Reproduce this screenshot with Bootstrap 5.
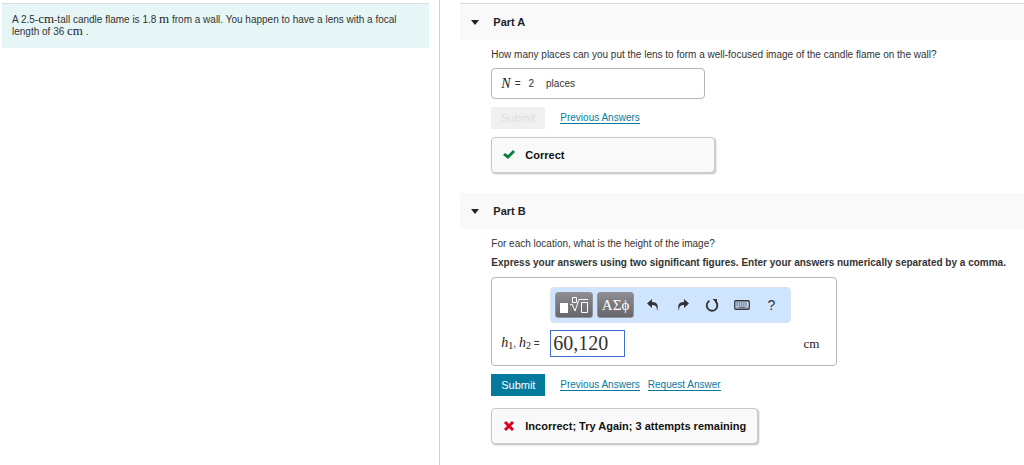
<!DOCTYPE html>
<html lang="en">
<head>
<meta charset="utf-8">
<meta name="viewport" content="width=device-width, initial-scale=1">
<title>Candle and lens problem</title>
<link href="https://cdn.jsdelivr.net/npm/bootstrap@5.3.0/dist/css/bootstrap.min.css" rel="stylesheet">
<style>
body{font-family:"Liberation Sans",Arial,sans-serif;font-size:10px;line-height:12px;color:#333;background:#fff}
.problem-pane{flex:0 0 43%;border-right:1px solid #ccd3dc;padding:3px 10px 0 2px}
.intro{background:#e6f6f7;border-top:1px solid #d5dfe0;padding:10px 20px 10px 10px}
.unit{font-family:"Liberation Serif",serif;font-size:13px;line-height:10px;color:#222}
.var{font-family:"Liberation Serif",serif;font-style:italic;font-size:14px;color:#222}
.var sub{font-style:normal;font-size:10px;bottom:-2px}
.part-pane{min-width:0;padding:3px 0 16px 20px}
.part + .part{margin-top:20px}
.part-head{background:#f9f9f9;height:36px;padding-left:11px;gap:14px}
.part-head.first{border-top:1px solid #dcdcdc;height:37px}
.part-head h2{font-size:11px;line-height:14px;font-weight:700;color:#222;margin:0}
.toggle{border:0;background:none;padding:0;width:8px;height:14px;display:flex;align-items:center}
.part-body{padding-left:31px}
.question{padding-top:9px;margin-bottom:7px}
.answer{border:1px solid #b3b3b3;border-radius:4px;background:#fff}
.answer-a{max-width:214px;height:31px;padding:0 9px}
.answer-b{max-width:346px;height:89px;padding:9px 17px 8px 9px}
.btn-answer{--bs-btn-font-size:11px;--bs-btn-line-height:14px;--bs-btn-padding-x:8px;--bs-btn-padding-y:4px;--bs-btn-border-radius:0;--bs-btn-border-width:0;--bs-btn-color:#fff;--bs-btn-bg:#047a9c;--bs-btn-hover-color:#fff;--bs-btn-hover-bg:#036582;--bs-btn-disabled-color:#dedede;--bs-btn-disabled-bg:#f0f0f0;--bs-btn-disabled-opacity:1;width:54px;height:22px}
.actions{gap:8px}
.actions .btn-answer{margin-right:7px}
.actions a{color:#047a9c;text-decoration:none;border-bottom:1px solid #047a9c;line-height:11px}
.feedback{border:1px solid #c9c9c9;border-radius:4px;background:#f9f9f9;box-shadow:1px 1px 2px #bbb;height:36px;padding:0 11px;gap:10px;font-size:11px;font-weight:700;color:#111}
.feedback.short{width:100%;max-width:224px}
.toolbar{background:#cfe5ff;border:1px solid #dbe3ec;border-radius:4px;width:241px;height:36px;padding:0 4px;margin-left:49px}
.tool-dark{border:1px solid #929298;border-radius:3px;background:linear-gradient(#8c8c91,#66666b);color:#fff;width:38px;height:26px;padding:0;font:15px "Liberation Serif",serif;line-height:24px;display:flex;align-items:center;justify-content:center}
.tool{border:0;background:none;padding:0;width:30px;height:26px;color:#333;font-size:14px;display:flex;align-items:center;justify-content:center}
.math-input{width:75px;height:27px;border:1px solid #3c6fd1;border-radius:0;padding:0 2px;font:20px "Liberation Serif",serif;color:#333}
.label-col{width:49px}
</style>
</head>
<body>
<div class="d-flex min-vh-100">
  <aside class="problem-pane">
    <p class="intro mb-0">A 2.5-<span class="unit">cm</span>-tall candle flame is 1.8 <span class="unit">m</span> from a wall. You happen to have a lens with a focal length of 36 <span class="unit">cm</span> .</p>
  </aside>
  <main class="part-pane flex-grow-1">
    <section class="part">
      <header class="part-head first d-flex align-items-center">
        <button type="button" class="toggle" aria-label="Collapse Part A"><svg width="8" height="5" viewBox="0 0 8 5"><path fill="#222" d="M0 0h8L4 5z"/></svg></button>
        <h2>Part A</h2>
      </header>
      <div class="part-body">
        <p class="question">How many places can you put the lens to form a well-focused image of the candle flame on the wall?</p>
        <div class="answer answer-a d-flex align-items-center mb-2"><span class="var">N</span><span class="ms-1">=</span><span class="ms-2">2</span><span class="ms-2 ps-1">places</span></div>
        <div class="actions d-flex align-items-center mb-2">
          <button type="button" class="btn btn-answer" disabled>Submit</button>
          <a href="#">Previous Answers</a>
        </div>
        <div class="feedback short d-flex align-items-center">
          <svg width="12" height="10" viewBox="0 0 12 10"><path fill="#087f3b" d="M0 5l2-2 3 2L10 0l2 2-7 7z"/></svg><span>Correct</span>
        </div>
      </div>
    </section>
    <section class="part">
      <header class="part-head d-flex align-items-center">
        <button type="button" class="toggle" aria-label="Collapse Part B"><svg width="8" height="5" viewBox="0 0 8 5"><path fill="#222" d="M0 0h8L4 5z"/></svg></button>
        <h2>Part B</h2>
      </header>
      <div class="part-body">
        <p class="question">For each location, what is the height of the image?</p>
        <p class="mb-2 fw-bold">Express your answers using two significant figures. Enter your answers numerically separated by a comma.</p>
        <div class="answer answer-b d-flex flex-column justify-content-between mb-2">
          <div class="toolbar d-flex align-items-center" role="toolbar" aria-label="Equation tools">
            <button type="button" class="tool-dark me-1" aria-label="Templates"><svg width="30" height="20" viewBox="0 0 30 20"><path fill="#fff" d="M1 8h8v10H1z"/><path fill="none" stroke="#fff" d="M13.500 2.500h4v5h-4zM11 10l2-1 3 7L20 4.500h9M22.500 7.500h6v10h-6z"/></svg></button>
            <button type="button" class="tool-dark" aria-label="Greek letters">ΑΣϕ</button>
            <button type="button" class="tool ms-1" aria-label="Undo"><svg width="12" height="12" viewBox="0 0 12 12"><path fill="#333" d="M0 4.500L5 0v3c5 0 7 3 5 9 0-4-1-6-5-6v3z"/></svg></button>
            <button type="button" class="tool" aria-label="Redo"><svg width="12" height="12" viewBox="0 0 12 12"><path fill="#333" d="M12 4.500L7 0v3c-5 0-7 3-5 9 0-4 1-6 5-6v3z"/></svg></button>
            <button type="button" class="tool" aria-label="Reset"><svg width="14" height="14" viewBox="0 0 14 14"><path fill="none" stroke="#333" stroke-width="1.800" d="M10.300 3.300A5.300 5.300 0 1 1 4.500 2.800"/><path fill="#333" d="M7.500 1h4.500v4.500z"/></svg></button>
            <button type="button" class="tool" aria-label="Keyboard"><svg width="16" height="10" viewBox="0 0 16 10"><rect x=".75" y=".75" width="14.500" height="8.500" rx="1" fill="none" stroke="#333" stroke-width="1.300"/><path stroke="#333" stroke-dasharray="1.500 .7" d="M2.500 3h11M2.500 5h11"/><path stroke="#333" d="M2.500 7.200h1M4.500 7.200h7M12.500 7.200h1"/></svg></button>
            <button type="button" class="tool" aria-label="Help">?</button>
          </div>
          <div class="d-flex align-items-center">
            <label class="label-col" for="heights"><span class="var">h<sub>1</sub></span>, <span class="var">h<sub>2</sub></span> =</label>
            <input id="heights" class="math-input" type="text" value="60,120">
            <span class="unit ms-auto">cm</span>
          </div>
        </div>
        <div class="actions d-flex align-items-center mb-2 pb-1">
          <button type="button" class="btn btn-answer">Submit</button>
          <a href="#">Previous Answers</a>
          <a href="#">Request Answer</a>
        </div>
        <div class="feedback d-inline-flex align-items-center">
          <svg width="12" height="12" viewBox="0 0 12 12"><path fill="none" stroke="#db0020" stroke-width="3" d="M2 2l8 8M10 2l-8 8"/></svg><span>Incorrect; Try Again; 3 attempts remaining</span>
        </div>
      </div>
    </section>
  </main>
</div>
<script src="https://cdn.jsdelivr.net/npm/bootstrap@5.3.0/dist/js/bootstrap.bundle.min.js"></script>
</body>
</html>
